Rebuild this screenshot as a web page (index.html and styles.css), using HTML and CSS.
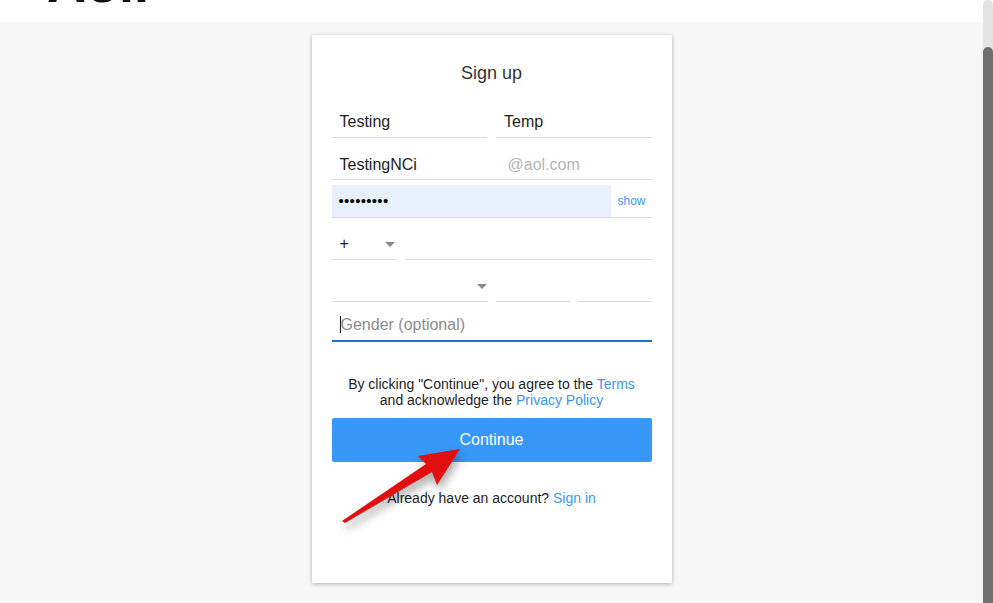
FILE: index.html
```html
<!DOCTYPE html>
<html lang="en">
<head>
    <title>Sign up</title>
    <meta charset="utf-8">
    <meta name="viewport" content="width=device-width, initial-scale=1">
    <link rel="stylesheet" href="styles.css">
</head>
<body>
    <div class="page">
        <div class="main">
            <div class="topbar">
                <span class="logo">Aol.</span>
            </div>

            <div class="content">
                <div class="card">
                    <h2 class="title">Sign up</h2>

                    <div class="row two">
                        <div class="field">Testing</div>
                        <div class="field">Temp</div>
                    </div>

                    <div class="row email">
                        <div class="user">TestingNCi</div>
                        <div class="domain">@aol.com</div>
                    </div>

                    <div class="row password">
                        <div class="dots">&bull;&bull;&bull;&bull;&bull;&bull;&bull;&bull;&bull;</div>
                        <a class="show" href="#">show</a>
                    </div>

                    <div class="row phone">
                        <div class="field select">+<span class="caret"></span></div>
                        <div class="field"></div>
                    </div>

                    <div class="row birth">
                        <div class="field select"><span class="caret"></span></div>
                        <div class="field"></div>
                        <div class="field"></div>
                    </div>

                    <div class="row gender">
                        <span class="cursor"></span><span class="placeholder">Gender (optional)</span>
                    </div>

                    <p class="terms">
                        By clicking "Continue", you agree to the <a href="#">Terms</a><br>
                        and acknowledge the <a href="#">Privacy Policy</a>
                    </p>

                    <button class="continue">Continue</button>

                    <p class="signin">Already have an account? <a href="#">Sign in</a></p>
                </div>
            </div>
        </div>

        <div class="scrollbar">
            <div class="thumb"></div>
        </div>
    </div>

    <svg class="arrow" viewBox="0 0 993 603" width="993" height="603">
        <polygon points="342,521 426,464 418,456 460,449 437,485 432,472 345,523" fill="#e10f0f"/>
    </svg>
</body>
</html>
```

FILE: styles.css
```css
* {
    box-sizing: border-box;
}

body {
    margin: 0;
    font-family: "Liberation Sans", Arial, sans-serif;
    color: #222;
    overflow: hidden;
}

a {
    color: #3d96f5;
    text-decoration: none;
}

.page {
    display: grid;
    grid-template-columns: 1fr 10px;
    height: 603px;
}

.main {
    display: flex;
    flex-direction: column;
    background-color: #f7f7f7;
}

.topbar {
    height: 22px;
    overflow: hidden;
    background-color: white;
    padding-left: 47px;
}

.logo {
    display: block;
    font-size: 54px;
    line-height: 54px;
    font-weight: bold;
    color: #111;
    margin-top: -44px;
}

.content {
    display: flex;
    justify-content: center;
    padding-top: 13px;
}

.card {
    width: 360px;
    height: 548px;
    background-color: white;
    padding: 26px 20px 0;
    box-shadow: 0 1px 4px rgba(0, 0, 0, 0.3);
}

.title {
    margin: 0 0 20px;
    font-size: 18px;
    line-height: 24px;
    font-weight: normal;
    text-align: center;
    color: #333;
}

.row {
    display: grid;
    margin-top: 9px;
}

.row.two {
    margin-top: 0;
    grid-template-columns: 1fr 1fr;
    gap: 9px;
}

.field,
.user,
.domain {
    height: 33px;
    line-height: 32px;
    padding-top: 1px;
    padding-left: 8px;
    font-size: 16px;
    border-bottom: 1px solid #dcdcdc;
}

.row.email {
    grid-template-columns: 168px 1fr;
    border-bottom: 1px solid #dcdcdc;
    height: 33px;
}

.row.email .user,
.row.email .domain {
    border-bottom: none;
    padding-top: 2px;
}

.domain {
    color: #b5b5b5;
}

.row.password {
    margin-top: 5px;
    grid-template-columns: 1fr 41px;
    height: 33px;
    border-bottom: 1px solid #dcdcdc;
}

.dots {
    background-color: #e8f0fe;
    line-height: 32px;
    padding-left: 7px;
    font-size: 15px;
    color: #000;
    letter-spacing: 0.3px;
}

.show {
    font-size: 12px;
    line-height: 32px;
    padding-left: 7px;
}

.row.phone {
    grid-template-columns: 65px 1fr;
    gap: 8px;
}

.row.birth {
    grid-template-columns: 156px 1fr 1fr;
    gap: 8px;
}

.select {
    position: relative;
}

.caret {
    position: absolute;
    right: 2px;
    top: 15px;
    border-left: 5px solid transparent;
    border-right: 5px solid transparent;
    border-top: 5px solid #8a8a8a;
}

.row.birth .caret {
    right: 1px;
}

.row.gender {
    display: flex;
    align-items: center;
    margin-top: 6px;
    height: 34px;
    padding-top: 1px;
    padding-left: 8px;
    border-bottom: 2px solid #1c72d8;
    font-size: 16px;
}

.cursor {
    width: 1px;
    height: 17px;
    background-color: #111;
}

.placeholder {
    color: #8c8c8c;
}

.terms {
    margin: 34px 0 0;
    font-size: 14px;
    line-height: 16px;
    text-align: center;
    color: #1e1e1e;
}

.continue {
    display: block;
    width: 100%;
    height: 44px;
    margin-top: 10px;
    border: none;
    border-radius: 2px;
    background-color: #3898f8;
    color: white;
    font-family: inherit;
    font-size: 16px;
}

.signin {
    margin: 28px 0 0;
    font-size: 14px;
    line-height: 16px;
    text-align: center;
    color: #1e1e1e;
}

.scrollbar {
    display: flex;
    flex-direction: column;
    padding-top: 47px;
    background-color: #e3e3e3;
    border-radius: 5px 5px 0 0;
}

.thumb {
    flex: 1;
    background-color: #6e6e6e;
    border-radius: 5px 5px 0 0;
}

.arrow {
    position: absolute;
    top: 0;
    left: 0;
    pointer-events: none;
    filter: drop-shadow(2px 6px 5px rgba(0, 0, 0, 0.35));
}
```
